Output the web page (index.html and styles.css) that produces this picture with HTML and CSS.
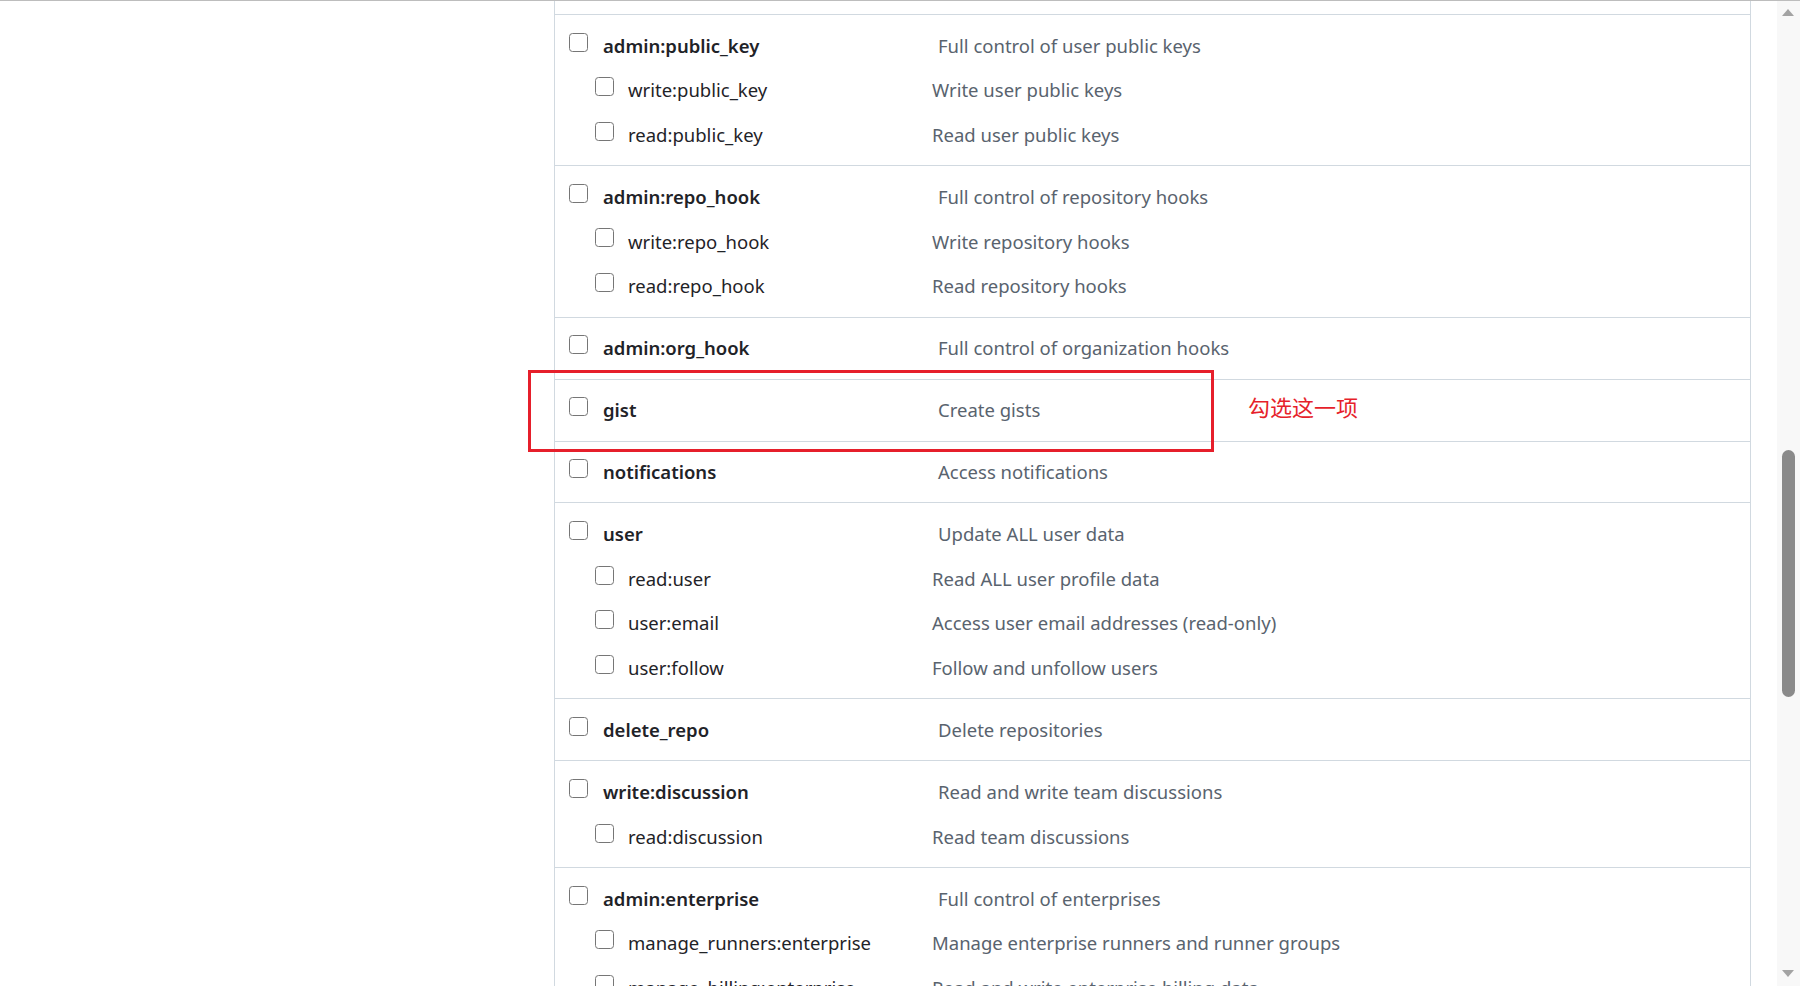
FILE: index.html
```html
<!DOCTYPE html>
<html lang="en">
<head>
<meta charset="utf-8">
<title>Scopes</title>
<link rel="stylesheet" href="styles.css">
</head>
<body>
<div class="viewport">
  <div class="scopes">
    <div class="group">
      <div class="row main"><label class="cell"><input type="checkbox" class="cb"><span class="name">admin:public_key</span></label><span class="desc">Full control of user public keys</span></div>
      <div class="row sub"><label class="cell"><input type="checkbox" class="cb"><span class="name">write:public_key</span></label><span class="desc">Write user public keys</span></div>
      <div class="row sub"><label class="cell"><input type="checkbox" class="cb"><span class="name">read:public_key</span></label><span class="desc">Read user public keys</span></div>
    </div>
    <div class="group">
      <div class="row main"><label class="cell"><input type="checkbox" class="cb"><span class="name">admin:repo_hook</span></label><span class="desc">Full control of repository hooks</span></div>
      <div class="row sub"><label class="cell"><input type="checkbox" class="cb"><span class="name">write:repo_hook</span></label><span class="desc">Write repository hooks</span></div>
      <div class="row sub"><label class="cell"><input type="checkbox" class="cb"><span class="name">read:repo_hook</span></label><span class="desc">Read repository hooks</span></div>
    </div>
    <div class="group">
      <div class="row main"><label class="cell"><input type="checkbox" class="cb"><span class="name">admin:org_hook</span></label><span class="desc">Full control of organization hooks</span></div>
    </div>
    <div class="group">
      <div class="row main"><label class="cell"><input type="checkbox" class="cb"><span class="name">gist</span></label><span class="desc">Create gists</span></div>
    </div>
    <div class="group">
      <div class="row main"><label class="cell"><input type="checkbox" class="cb"><span class="name">notifications</span></label><span class="desc">Access notifications</span></div>
    </div>
    <div class="group">
      <div class="row main"><label class="cell"><input type="checkbox" class="cb"><span class="name">user</span></label><span class="desc">Update ALL user data</span></div>
      <div class="row sub"><label class="cell"><input type="checkbox" class="cb"><span class="name">read:user</span></label><span class="desc">Read ALL user profile data</span></div>
      <div class="row sub"><label class="cell"><input type="checkbox" class="cb"><span class="name">user:email</span></label><span class="desc">Access user email addresses (read-only)</span></div>
      <div class="row sub"><label class="cell"><input type="checkbox" class="cb"><span class="name">user:follow</span></label><span class="desc">Follow and unfollow users</span></div>
    </div>
    <div class="group">
      <div class="row main"><label class="cell"><input type="checkbox" class="cb"><span class="name">delete_repo</span></label><span class="desc">Delete repositories</span></div>
    </div>
    <div class="group">
      <div class="row main"><label class="cell"><input type="checkbox" class="cb"><span class="name">write:discussion</span></label><span class="desc">Read and write team discussions</span></div>
      <div class="row sub"><label class="cell"><input type="checkbox" class="cb"><span class="name">read:discussion</span></label><span class="desc">Read team discussions</span></div>
    </div>
    <div class="group">
      <div class="row main"><label class="cell"><input type="checkbox" class="cb"><span class="name">admin:enterprise</span></label><span class="desc">Full control of enterprises</span></div>
      <div class="row sub"><label class="cell"><input type="checkbox" class="cb"><span class="name">manage_runners:enterprise</span></label><span class="desc">Manage enterprise runners and runner groups</span></div>
      <div class="row sub"><label class="cell"><input type="checkbox" class="cb"><span class="name">manage_billing:enterprise</span></label><span class="desc">Read and write enterprise billing data</span></div>
    </div>
  </div>

  <div class="highlight"></div>
  <div class="note">勾选这一项</div>

  <div class="scrollbar">
    <span class="arrow up"></span>
    <span class="thumb"></span>
    <span class="arrow down"></span>
  </div>
</div>
</body>
</html>
```

FILE: styles.css
```css
html, body {
  margin: 0;
  padding: 0;
  background: #ffffff;
}

body {
  overflow: hidden;
  height: 986px;
  border-top: 1px solid #bdbdbd;
  box-sizing: border-box;
  font-family: "Noto Sans", "Open Sans", sans-serif;
  font-size: 18.5px;
  color: #1f2328;
}

.viewport {
  position: relative;
  height: 985px;
  overflow: hidden;
}

.scopes {
  margin-left: 554px;
  width: 1197px;
  box-sizing: border-box;
  border-left: 1px solid #d1d9e0;
  border-right: 1px solid #d1d9e0;
  padding-top: 13px;
  min-height: 1200px;
}

.group {
  border-top: 1px solid #d1d9e0;
  padding: 18.7px 0 18.3px;
  display: flex;
  flex-direction: column;
  gap: 20.65px;
}

.row {
  display: flex;
  height: 24px;
  line-height: 24px;
  white-space: nowrap;
}

.cell {
  display: flex;
  align-items: flex-start;
  box-sizing: border-box;
  flex: none;
}

.main .cell {
  width: 383px;
  padding-left: 14px;
  gap: 15px;
}

.sub .cell {
  width: 377px;
  padding-left: 40px;
  gap: 14px;
}

.cb {
  appearance: none;
  -webkit-appearance: none;
  margin: -1.2px 0 0 0;
  width: 19px;
  height: 19px;
  box-sizing: border-box;
  border: 1.5px solid #767676;
  border-radius: 3.5px;
  background: #ffffff;
  flex: none;
}

.main .name {
  font-weight: 600;
  color: #1f2328;
}

.sub .name {
  color: #1f2328;
}

.desc {
  color: #59636e;
}

.highlight {
  position: absolute;
  left: 528px;
  top: 369px;
  width: 686px;
  height: 82px;
  box-sizing: border-box;
  border: 3px solid #e61f2b;
}

.note {
  position: absolute;
  left: 1248px;
  top: 392px;
  font-family: "Noto Sans CJK SC", sans-serif;
  font-size: 22px;
  line-height: 26px;
  font-weight: 400;
  color: #e61f2b;
}

.scrollbar {
  position: absolute;
  right: 0;
  top: 0;
  width: 23px;
  height: 985px;
  background: #f8f8f8;
}

.arrow {
  position: absolute;
  left: 5px;
  width: 0;
  height: 0;
  border-left: 6.5px solid transparent;
  border-right: 6.5px solid transparent;
}

.arrow.up {
  top: 8px;
  border-bottom: 7px solid #a3a3a3;
}

.arrow.down {
  top: 969px;
  border-top: 7px solid #a3a3a3;
}

.thumb {
  position: absolute;
  left: 5px;
  top: 449px;
  width: 13px;
  height: 247px;
  border-radius: 7px;
  background: #8a8a8a;
}
```
